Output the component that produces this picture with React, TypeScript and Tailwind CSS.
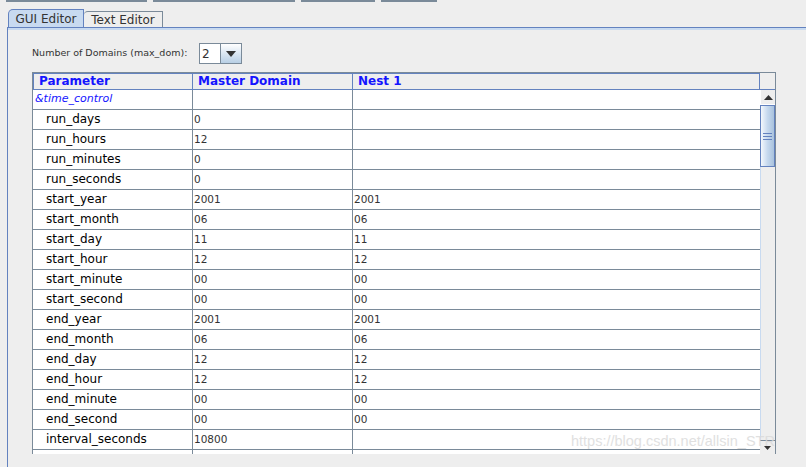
import React from 'react';

const rows: [string, string, string][] = [
  ['run_days', '0', ''],
  ['run_hours', '12', ''],
  ['run_minutes', '0', ''],
  ['run_seconds', '0', ''],
  ['start_year', '2001', '2001'],
  ['start_month', '06', '06'],
  ['start_day', '11', '11'],
  ['start_hour', '12', '12'],
  ['start_minute', '00', '00'],
  ['start_second', '00', '00'],
  ['end_year', '2001', '2001'],
  ['end_month', '06', '06'],
  ['end_day', '12', '12'],
  ['end_hour', '12', '12'],
  ['end_minute', '00', '00'],
  ['end_second', '00', '00'],
  ['interval_seconds', '10800', ''],
  ['', '', ''],
];

function Row({ name, a, b }: { name: string; a: string; b: string }) {
  return (
    <div className="flex h-[20px] shrink-0 border-b border-[#7a8a99] bg-white">
      <div className="w-[160px] shrink-0 border-r border-[#7a8a99] pl-[13px] text-[12px] leading-[18px] text-black">{name}</div>
      <div className="w-[160px] shrink-0 border-r border-[#7a8a99] pl-[1px] text-[10.5px] leading-[18px] text-[#333333]">{a}</div>
      <div className="flex-1 pl-[1px] text-[10.5px] leading-[18px] text-[#333333]">{b}</div>
    </div>
  );
}

export default function App() {
  return (
    <div className="relative h-[467px] w-[806px] overflow-hidden bg-[#eeeeee] font-['DejaVu_Sans',sans-serif]">
      {/* remains of toolbar buttons above */}
      <div className="flex h-[9px] items-start">
        <div className="ml-[6px] h-[2px] w-[141px] border-t-2 border-[#7a8a99]" />
        <div className="ml-[6px] h-[2px] w-[142px] border-t-2 border-[#7a8a99]" />
        <div className="ml-[6px] h-[2px] w-[74px] border-t-2 border-[#7a8a99]" />
        <div className="ml-[6px] h-[2px] w-[56px] border-t-2 border-[#7a8a99]" />
      </div>

      {/* tabs */}
      <div className="ml-[8px] flex h-[18px] items-end">
        <div className="relative flex h-[18px] w-[76px] items-center justify-center rounded-tl-[5px] border border-b-0 border-[#6382bf] bg-[#c8daf0] text-[12px] text-[#333333]">
          GUI Editor
        </div>
        <div className="flex h-[16px] w-[79px] items-center justify-center rounded-tl-[4px] border border-b-0 border-l-0 border-[#7a8a99] bg-[#eeeeee] text-[12px] text-[#333333]">
          Text Editor
        </div>
      </div>

      {/* tab content */}
      <div className="ml-[7px] h-[440px] border-l border-t border-[#6382bf]">
        <div className="h-[2px] bg-[#c8daf0]" />
        <div className="flex items-center pl-[24px] pt-[13px]">
          <span className="w-[167px] text-[9.5px] text-[#333333]">Number of Domains (max_dom):</span>
          <div className="flex h-[21px] border border-[#7a8a99]">
            <div className="flex w-[21px] items-center border-r border-[#7a8a99] bg-white pl-[2px] text-[12px] text-[#333333]">2</div>
            <div className="flex w-[20px] items-center justify-center bg-gradient-to-b from-[#ffffff] to-[#b8cfe5]">
              <svg width="10" height="6" viewBox="0 0 10 6"><path d="M0 0h10L5 6z" fill="#333333" /></svg>
            </div>
          </div>
        </div>

        {/* table */}
        <div className="ml-[24px] mt-[8px] flex h-[382px] w-[744px]">
          <div className="flex h-[382px] w-[728px] flex-col overflow-hidden border-l border-t border-[#7a8a99]">
            <div className="flex h-[17px] shrink-0 bg-[#eeeeee] text-[12px] font-bold leading-[15px] text-[#1414ff]">
              <div className="w-[160px] shrink-0 border border-[#6382bf] pl-[5px]">Parameter</div>
              <div className="w-[160px] shrink-0 border border-l-0 border-[#6382bf] pl-[5px]">Master Domain</div>
              <div className="flex-1 border border-l-0 border-[#6382bf] pl-[5px]">Nest 1</div>
            </div>
            <div className="flex h-[20px] shrink-0 border-b border-[#7a8a99] bg-white">
              <div className="w-[160px] shrink-0 border-r border-[#7a8a99] pl-[2px] text-[11px] italic leading-[18px] text-[#1414ff]">&amp;time_control</div>
              <div className="w-[160px] shrink-0 border-r border-[#7a8a99]" />
              <div className="flex-1" />
            </div>
            {rows.map(([n, a, b], i) => (
              <Row key={i} name={n} a={a} b={b} />
            ))}
          </div>

          {/* scrollbar */}
          <div className="flex h-[382px] w-[16px] flex-col border-r border-t border-[#7a8a99] bg-[#eeeeee]">
            <div className="h-[17px] shrink-0 border-b border-[#6382bf]" />
            <div className="flex h-[15px] shrink-0 items-center justify-center border-b border-l border-[#ffffff] bg-[#eeeeee]">
              <svg width="9" height="5" viewBox="0 0 9 5"><path d="M0 5h9L4.5 0z" fill="#333333" /></svg>
            </div>
            <div className="flex h-[62px] shrink-0 items-center justify-center border border-[#6382bf] bg-gradient-to-r from-[#f4f8fc] via-[#c6d9ee] to-[#a9c2dd]">
              <div className="flex flex-col gap-[2px]">
                <div className="h-px w-[9px] bg-[#6382bf]" />
                <div className="h-px w-[9px] bg-[#6382bf]" />
                <div className="h-px w-[9px] bg-[#6382bf]" />
              </div>
            </div>
            <div className="flex-1 border-l border-[#c8daf0]" />
            <div className="flex h-[14px] shrink-0 items-center justify-center border-t border-[#7a8a99] bg-[#eeeeee]">
              <svg width="7" height="4" viewBox="0 0 7 4"><path d="M0 0h7L3.5 4z" fill="#333333" /></svg>
            </div>
          </div>
        </div>
      </div>

      {/* watermark */}
      <div className="pointer-events-none absolute left-[571px] top-[431px] font-['Liberation_Sans',sans-serif] text-[14.5px] text-[#d9d9d9] opacity-80">
        https://blog.csdn.net/allsin_STR
      </div>
    </div>
  );
}
